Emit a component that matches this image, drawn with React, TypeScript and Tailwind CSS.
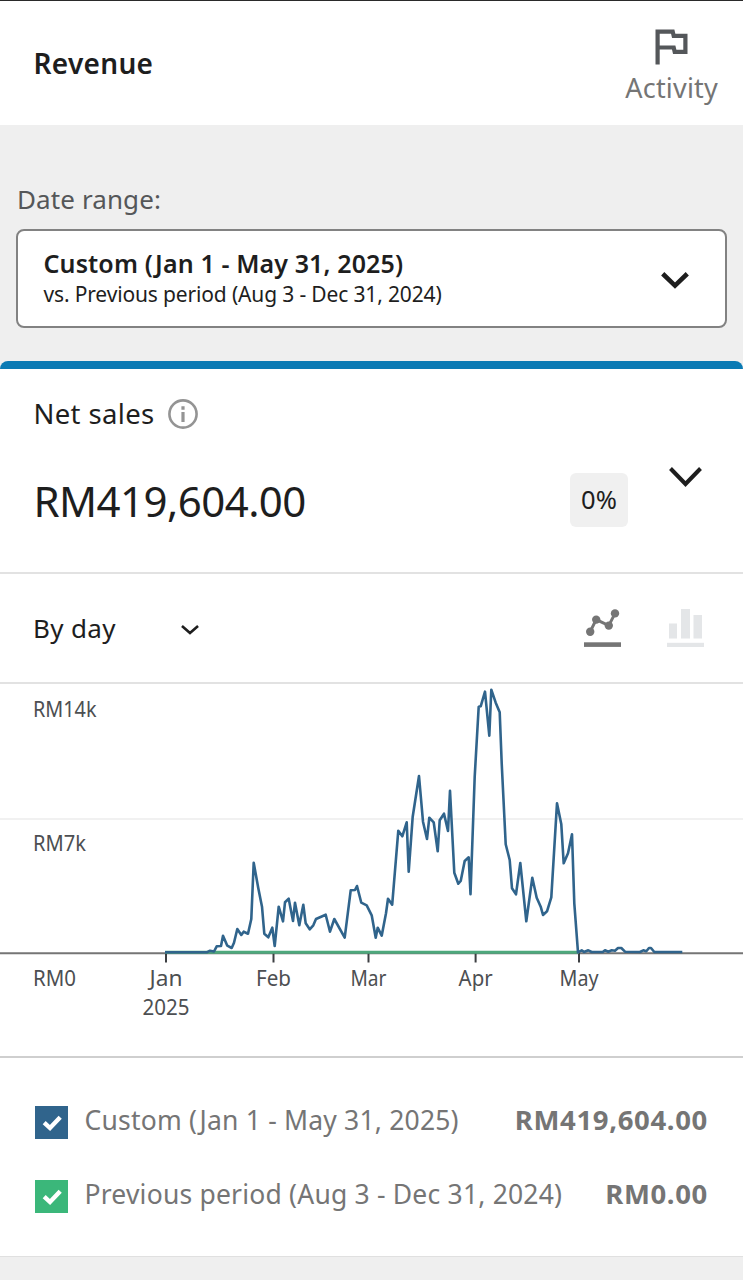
import type { ReactNode } from "react";

const AXIS_Y = 952.3;

// Net sales per day, already projected to chart coordinates.
const SALES_POINTS: [number, number][] = [
  [165, 952.3], [206.7, 952.3], [210, 950.7], [214, 951.5], [216.7, 946.3], [221, 946],
  [223, 935.7], [227.3, 945.7], [231.7, 948], [234, 942.7], [237.3, 929], [241.3, 935],
  [243.7, 931.7], [248, 933.7], [251.3, 919], [253.7, 862.7], [258.3, 888.3], [262, 906.7],
  [264.3, 933.7], [268.3, 937.3], [272.3, 927.7], [274.7, 946], [278.7, 906.7], [283, 921.3],
  [285, 902.3], [288.7, 898.7], [293, 921], [295, 902.7], [299.3, 925.3], [303.3, 904.7],
  [305.7, 923.3], [309.7, 929.3], [313.3, 925.3], [316, 919], [325.7, 914.7], [330, 931.7],
  [334.3, 919], [344.7, 937.7], [350.7, 890.3], [355, 890], [357, 886], [361.3, 902.7],
  [366.7, 905.3], [371.7, 915.3], [375.7, 937.7], [377.7, 927.7], [381.7, 935.7], [386, 913.3],
  [388, 898.7], [392.2, 904.7], [398.3, 830.7], [402.3, 836.3], [406.7, 822.3], [408.7, 871.7],
  [412.7, 816.7], [419, 776], [423, 821.7], [427, 839], [429.3, 817.7], [433.7, 822.3],
  [437.7, 851.3], [439.7, 820.3], [444, 813.7], [448, 831], [450, 790.7], [454.3, 872.7],
  [458.3, 883.7], [460.7, 881], [464.7, 861], [468.7, 857.3], [470.5, 894.3], [474.7, 776.7],
  [478.7, 706.7], [480.7, 706.3], [485, 691.7], [489.3, 735.7], [491.3, 689.7], [495.7, 702.7],
  [499.7, 712.3], [501.7, 763.3], [505.7, 844.3], [509.7, 860], [512, 888.3], [516, 894.3],
  [520.3, 863], [526.3, 921.3], [532.3, 877.7], [536.7, 897.7], [540.7, 906.7], [543, 915],
  [547, 911.3], [551.3, 897.3], [557, 803.3], [561.3, 824.3], [563.7, 863.3], [568, 853.3],
  [572, 834.3], [574.3, 903.3], [578, 952.3], [581.7, 950.3], [584, 952], [588.3, 950.3],
  [591.7, 952], [602.7, 952], [605, 950.3], [608.3, 951.7], [611.7, 950.3], [615, 950.7],
  [618, 948], [621.3, 948], [625, 951.7], [640, 952], [643.3, 950.3], [646.3, 951.3],
  [649, 948], [651, 948], [654.3, 952], [682.3, 952],
];

const Y_LABELS = [
  { text: "RM14k", y: 717, width: 63.5 },
  { text: "RM7k", y: 851, width: 53 },
  { text: "RM0", y: 985.5, width: 43 },
];

const MONTHS = [
  { text: "Jan", x: 166, width: 33 },
  { text: "Feb", x: 273.5, width: 35 },
  { text: "Mar", x: 368.5, width: 36 },
  { text: "Apr", x: 475.6, width: 34 },
  { text: "May", x: 579, width: 39 },
];

function FlagIcon() {
  return (
    <svg width="34" height="36" viewBox="0 0 34 36" fill="none" stroke="#54575a" strokeWidth="4.2" aria-hidden>
      <path d="M2.6 35.5V2.6H17.7L18.7 6.8H30.4V22.8H19.7L18.7 18.5H2.6" />
    </svg>
  );
}

function Chevron({ width, height, stroke }: { width: number; height: number; stroke: number }) {
  const s = stroke / 2;
  return (
    <svg width={width} height={height} fill="none" stroke="#1e1e1e" strokeWidth={stroke} className="block" aria-hidden>
      <path d={`M${s * 0.75} ${s * 0.75}L${width / 2} ${height - stroke * 0.75}L${width - s * 0.75} ${s * 0.75}`} />
    </svg>
  );
}

function InfoIcon() {
  return (
    <svg width="30" height="30" viewBox="0 0 30 30" fill="none" aria-hidden>
      <circle cx="15" cy="15" r="13.6" stroke="#949494" strokeWidth="2.6" />
      <path d="M15 13v10M15 7.2v3.6" stroke="#949494" strokeWidth="3.2" />
    </svg>
  );
}

function LineChartIcon() {
  return (
    <svg width="37" height="39" viewBox="584 609 37 39" fill="#757575" aria-hidden>
      <path d="M590.2 631.7L596.2 619.6L608.8 625.6L615 613.4" fill="none" stroke="#757575" strokeWidth="3" />
      <circle cx="590.2" cy="631.7" r="4.2" />
      <circle cx="596.2" cy="619.6" r="4.2" />
      <circle cx="608.8" cy="625.6" r="4.2" />
      <circle cx="615" cy="613.4" r="4.2" />
      <rect x="584" y="642.3" width="37" height="4.6" />
    </svg>
  );
}

function BarChartIcon() {
  return (
    <svg width="37" height="39" viewBox="667 609 37 39" fill="#e4e6e8" aria-hidden>
      <rect x="669" y="623.5" width="8" height="15" />
      <rect x="681" y="609" width="9" height="29.5" />
      <rect x="693.5" y="615" width="8.5" height="23.5" />
      <rect x="667" y="642.8" width="37" height="4.2" />
    </svg>
  );
}

function RevenueChart() {
  return (
    <svg
      width="743"
      height="372"
      viewBox="0 684 743 372"
      className="block"
      fontFamily='"Noto Sans", sans-serif'
      fontSize="21.5"
      fill="#4d4f52"
    >
      <path d="M0 819H743" stroke="#ececec" strokeWidth="1.4" />
      <path d="M0 953.3H743" stroke="#757575" strokeWidth="2" />
      {MONTHS.map((m) => (
        <path key={m.text} d={`M${m.x} 953V962.5`} stroke="#3c3f42" strokeWidth="2" />
      ))}
      <path d={`M165 ${AXIS_Y}H579`} stroke="#4ea87c" strokeWidth="3" />
      <polyline
        points={SALES_POINTS.map((p) => p.join(",")).join(" ")}
        fill="none"
        stroke="#30648c"
        strokeWidth="2.6"
        strokeLinejoin="round"
      />
      {Y_LABELS.map((l) => (
        <text key={l.text} x="33" y={l.y} textLength={l.width} lengthAdjust="spacingAndGlyphs">
          {l.text}
        </text>
      ))}
      {MONTHS.map((m) => (
        <text key={m.text} x={m.x - m.width / 2} y="985.5" textLength={m.width} lengthAdjust="spacingAndGlyphs">
          {m.text}
        </text>
      ))}
      <text x="142.5" y="1014.5" textLength="47" lengthAdjust="spacingAndGlyphs">
        2025
      </text>
    </svg>
  );
}

function LegendRow({ box, label, value }: { box: ReactNode; label: string; value: string }) {
  return (
    <div className="flex h-[74px] items-center pr-[35px] pl-[35px]">
      {box}
      <span className="mt-px ml-[16.5px] flex-1 text-[26.5px] tracking-[0.2px] whitespace-nowrap">{label}</span>
      <span className="text-[27.5px] font-bold tracking-[0.65px]">{value}</span>
    </div>
  );
}

function Check() {
  return (
    <svg width="33" height="33" viewBox="0 0 33 33" fill="none" stroke="#fff" strokeWidth="4.4" aria-hidden>
      <path d="M9.2 16.6L15 22L25.2 11.2" />
    </svg>
  );
}

export default function App() {
  return (
    <div className="flex h-[1280px] w-[743px] flex-col overflow-hidden bg-[#efefef] font-['Noto_Sans',sans-serif] text-[#1e1e1e]">
      <header className="flex h-[125px] shrink-0 items-start justify-between border-t-[1.5px] border-[#2a2a2a] bg-white pr-[25px] pl-[33.5px]">
        <h1 className="mt-[42px] text-[28px] leading-10 font-semibold tracking-[0.3px]">Revenue</h1>
        <div className="mt-[28px] flex flex-col items-center text-[#757575]">
          <FlagIcon />
          <span className="mt-1 text-[27px] leading-[38px] tracking-[0.2px]">Activity</span>
        </div>
      </header>

      <section className="h-[236px] shrink-0 px-4 pt-[54px]">
        <p className="pl-px text-[26px] leading-10 tracking-[0.1px] text-[#555759]">Date range:</p>
        <button className="mt-[10px] flex h-[99px] w-[711px] items-center justify-between rounded-lg border-2 border-[#828282] bg-white pr-9 pl-[25.5px] text-left">
          <span className="-mt-[3px] flex flex-col">
            <span className="text-[25px] leading-[34px] font-semibold tracking-[0.12px]">Custom (Jan 1 - May 31, 2025)</span>
            <span className="text-[21px] leading-[28px] tracking-[-0.15px]">vs. Previous period (Aug 3 - Dec 31, 2024)</span>
          </span>
          <span className="mt-1">
            <Chevron width={28} height={17} stroke={4.6} />
          </span>
        </button>
      </section>

      <main className="flex h-[896px] shrink-0 flex-col rounded-t-lg border-t-8 border-b border-t-[#0a7ab4] border-b-[#e0e0e0] bg-white">
        <section className="flex h-[205px] shrink-0 justify-between border-b-2 border-[#e2e2e2] pr-[41px] pl-[33.5px]">
          <div className="pt-[25px]">
            <div className="flex items-center gap-[13.5px] text-[27.5px] leading-10 tracking-[0.35px]">
              <span>Net sales</span>
              <InfoIcon />
            </div>
            <div className="mt-[37px] text-[42px] leading-[60px] tracking-[-0.55px]">RM419,604.00</div>
          </div>
          <div className="flex items-start">
            <div className="mt-[104px] flex h-[54px] w-[58px] items-center justify-center rounded-md bg-[#f0f0f0] pb-px text-[25.5px]">0%</div>
            <div className="mt-[98px] ml-[41px]">
              <Chevron width={33} height={20} stroke={4} />
            </div>
          </div>
        </section>

        <section className="flex h-[110px] shrink-0 items-center justify-between border-b-2 border-[#e2e2e2] pr-[39px] pl-[33px]">
          <div className="flex items-center">
            <span className="-mt-px w-[148px] text-[26px] leading-10 tracking-[0.35px]">By day</span>
            <span className="mt-[3px]">
              <Chevron width={18} height={10} stroke={2.6} />
            </span>
          </div>
          <div className="flex gap-[46px]">
            <LineChartIcon />
            <BarChartIcon />
          </div>
        </section>

        <RevenueChart />

        <section className="border-t-2 border-[#cfcfcf] pt-[25px] text-[#757575]">
          <LegendRow
            box={<span className="mt-1 bg-[#30648c]"><Check /></span>}
            label="Custom (Jan 1 - May 31, 2025)"
            value="RM419,604.00"
          />
          <LegendRow
            box={<span className="mt-1 bg-[#3bb77a]"><Check /></span>}
            label="Previous period (Aug 3 - Dec 31, 2024)"
            value="RM0.00"
          />
        </section>
      </main>
    </div>
  );
}
